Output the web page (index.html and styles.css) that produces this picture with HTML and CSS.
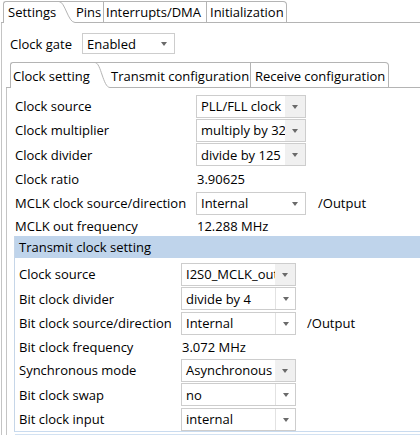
FILE: index.html
```html
<!DOCTYPE html>
<html>
<head>
<meta charset="utf-8">
<link rel="stylesheet" href="styles.css">
</head>
<body>
<div class="folder outer">
  <div class="tabs top-tabs">
    <div class="lead"></div>
    <div class="tab active t-settings">Settings</div>
    <svg class="curve" width="16" height="22" viewBox="0 0 16 22"><path d="M0 0.5 H16" stroke="#b4b4b4" fill="none"/><path d="M0 0.5 C6 0.5 9 21.5 16 21.5" stroke="#b4b4b4" fill="none"/></svg>
    <div class="tab t-pins">Pins</div>
    <div class="tab t-irq">Interrupts/DMA</div>
    <div class="tab last t-init">Initialization</div>
    <div class="fill"></div>
  </div>
  <div class="body outer-body">
    <div class="gate-row">
      <span class="gate-label">Clock gate</span>
      <div class="combo gate"><span class="val">Enabled</span><span class="btn"><i class="arrow"></i></span></div>
    </div>
    <div class="folder inner">
      <div class="tabs inner-tabs">
        <div class="lead"></div>
        <div class="tab active t-clock">Clock setting</div>
        <svg class="curve" width="15" height="26" viewBox="0 0 15 26"><path d="M0 0.5 H15" stroke="#b4b4b4" fill="none"/><path d="M0 0.5 C6 0.5 8 25.5 15 25.5" stroke="#b4b4b4" fill="none"/></svg>
        <div class="tab t-tx">Transmit configuration</div>
        <div class="tab last t-rx">Receive configuration</div>
        <div class="fill"></div>
      </div>
      <div class="body inner-body">
        <div class="form top-form">
          <div class="row"><span class="label">Clock source</span><div class="combo trunc"><span class="val">PLL/FLL clock</span><span class="btn"><i class="arrow"></i></span></div></div>
          <div class="row"><span class="label">Clock multiplier</span><div class="combo trunc"><span class="val">multiply by 32</span><span class="btn"><i class="arrow"></i></span></div></div>
          <div class="row"><span class="label">Clock divider</span><div class="combo trunc"><span class="val">divide by 125</span><span class="btn"><i class="arrow"></i></span></div></div>
          <div class="row"><span class="label">Clock ratio</span><span class="value">3.90625</span></div>
          <div class="row"><span class="label">MCLK clock source/direction</span><div class="combo"><span class="val">Internal</span><span class="btn"><i class="arrow"></i></span></div><span class="suffix">/Output</span></div>
          <div class="row short"><span class="label">MCLK out frequency</span><span class="value">12.288 MHz</span></div>
        </div>
        <div class="group">
          <div class="group-head">Transmit clock setting</div>
          <div class="form group-form">
            <div class="row"><span class="label">Clock source</span><div class="combo trunc"><span class="val">I2S0_MCLK_out</span><span class="btn"><i class="arrow"></i></span></div></div>
            <div class="row"><span class="label">Bit clock divider</span><div class="combo sep"><span class="val">divide by 4</span><span class="btn"><i class="arrow"></i></span></div></div>
            <div class="row"><span class="label">Bit clock source/direction</span><div class="combo sep"><span class="val">Internal</span><span class="btn"><i class="arrow"></i></span></div><span class="suffix">/Output</span></div>
            <div class="row text-row"><span class="label">Bit clock frequency</span><span class="value">3.072 MHz</span></div>
            <div class="row"><span class="label">Synchronous mode</span><div class="combo trunc"><span class="val">Asynchronous</span><span class="btn"><i class="arrow"></i></span></div></div>
            <div class="row"><span class="label">Bit clock swap</span><div class="combo sep"><span class="val">no</span><span class="btn"><i class="arrow"></i></span></div></div>
            <div class="row"><span class="label">Bit clock input</span><div class="combo sep"><span class="val">internal</span><span class="btn"><i class="arrow"></i></span></div></div>
          </div>
        </div>
        <div class="ghost-line"></div>
      </div>
    </div>
  </div>
</div>
</body>
</html>
```
FILE: styles.css
```css
html, body {
  margin: 0;
  padding: 0;
  background: #ffffff;
}
body {
  width: 420px;
  height: 437px;
  overflow: hidden;
  font-family: "Open Sans", "Noto Sans", sans-serif;
  font-size: 13px;
  color: #000000;
}

.folder { display: flex; flex-direction: column; }
.outer { margin-left: 1px; width: 419px; }

.tabs {
  display: flex;
  align-items: stretch;
  flex: none;
}
.top-tabs { height: 23px; padding-top: 1px; box-sizing: border-box; }
.inner-tabs { height: 27px; padding-top: 1px; box-sizing: border-box; }

.lead {
  border-bottom: 1px solid #b4b4b4;
  flex: none;
}
.top-tabs .lead { width: 2px; }
.inner-tabs .lead { width: 4px; }

.tab {
  flex: none;
  box-sizing: border-box;
  display: flex;
  align-items: center;
  white-space: nowrap;
  border-top: 1px solid #b4b4b4;
  border-bottom: 1px solid #b4b4b4;
  border-right: 1px solid #b4b4b4;
  background: #ffffff;
}
.tab.active {
  border-right: none;
  border-bottom: none;
  border-left: 1px solid #b4b4b4;
  border-top-left-radius: 3px;
}
.tab.last { border-top-right-radius: 4px; }
.curve { flex: none; display: block; }
.fill { flex: 1; border-bottom: 1px solid #b4b4b4; }

.t-settings { width: 56px; padding-left: 4px; padding-bottom: 1px; }
.t-pins { width: 29px; padding-left: 1px; padding-bottom: 1px; }
.t-irq { width: 103px; padding-left: 2px; padding-bottom: 1px; }
.t-init { width: 80px; padding-left: 3px; padding-bottom: 1px; }

.t-clock { width: 85px; padding-left: 2px; padding-top: 1px; }
.t-tx { width: 141px; padding-left: 1px; padding-top: 1px; }
.t-rx { width: 138px; padding-left: 4px; padding-top: 1px; }

.body { border-left: 1px solid #c4c4c4; }
.outer-body { padding: 10px 0 0 4px; flex: 1; }

.gate-row {
  display: flex;
  align-items: center;
  height: 21px;
  padding-left: 4px;
}
.gate-label { width: 72px; flex: none; }

.inner { margin-top: 7px; }
.inner-body { padding: 6px 0 0 8px; }

.form { display: flex; flex-direction: column; }
.row {
  display: flex;
  align-items: center;
  height: 24.25px;
  white-space: nowrap;
}
.row.short { height: 21px; }
.top-form .label { width: 181px; flex: none; }
.group-form .label { width: 162px; flex: none; }
.value { padding-left: 1px; }
.suffix { margin-left: 12px; }
.group-form .suffix { margin-left: 11px; }

.combo {
  flex: none;
  box-sizing: border-box;
  height: 23px;
  border: 1px solid #cdcdcd;
  display: flex;
  align-items: center;
  background: #ffffff;
}
.top-form .combo { width: 110px; }
.group-form .combo { width: 115px; }
.combo.gate { width: 93px; height: 21px; }
.val {
  flex: 1;
  min-width: 0;
  overflow: hidden;
  white-space: nowrap;
  padding-left: 4px;
}
.btn {
  flex: none;
  width: 20px;
  align-self: stretch;
  display: flex;
  align-items: center;
  justify-content: center;
  box-sizing: border-box;
}
.combo.trunc .btn { background: #f0f0f0; }
.combo.sep .btn { border-left: 1px solid #e2e2e2; }
.arrow {
  display: block;
  width: 0;
  height: 0;
  border-left: 3.5px solid transparent;
  border-right: 3.5px solid transparent;
  border-top: 4px solid #6a6a6a;
  margin-top: 1px;
}

.group {
  margin-left: -1px;
  border-left: 1px solid #c6d6e8;
  border-bottom: 1px solid #c9dbef;
}
.group-head {
  background: #bfd4eb;
  height: 22px;
  display: flex;
  align-items: center;
  padding-left: 4px;
}
.group-form { padding: 3.5px 0 0 4px; }
.group-form .row { height: 24.5px; }
.group-form .row.text-row { height: 22.5px; }
.ghost-line {
  height: 1px;
  margin-top: 2px;
  background: #d3e2f2;
}
```
